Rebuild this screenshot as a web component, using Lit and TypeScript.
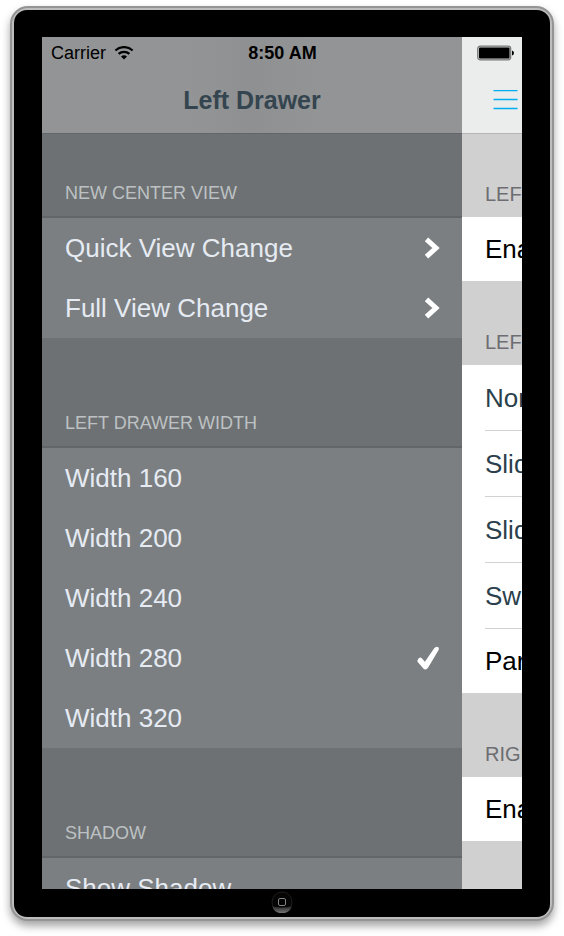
import { LitElement, html, svg, css } from "lit";
import { customElement, property, state } from "lit/decorators.js";
import { classMap } from "lit/directives/class-map.js";

type Accessory = "chevron" | "check" | "";

interface Section {
  title: string;
  rows: string[];
  kind?: "links" | "choices";
}

const DRAWER: Section[] = [
  { title: "NEW CENTER VIEW", rows: ["Quick View Change", "Full View Change"], kind: "links" },
  {
    title: "LEFT DRAWER WIDTH",
    rows: ["Width 160", "Width 200", "Width 240", "Width 280", "Width 320"],
    kind: "choices",
  },
  { title: "SHADOW", rows: ["Show Shadow"] },
];

const CENTER: Section[] = [
  { title: "LEFT DRAWER", rows: ["Enabled"] },
  {
    title: "LEFT DRAWER ANIMATION",
    rows: ["None", "Slide", "Slide & Scale", "Swinging Door", "Parallax"],
  },
  { title: "RIGHT DRAWER", rows: ["Enabled"] },
];

const chevron = svg`<svg width="24" height="24" viewBox="0 0 24 24" aria-hidden="true">
  <path d="M10.500 3.300L20 12L10.500 20.700" fill="none" stroke="#fff" stroke-width="5"/></svg>`;

const check = svg`<svg width="24" height="26" viewBox="0 0 24 26" aria-hidden="true">
  <path d="M1.800 14.800Q3.600 11.200 6 13.400L8.900 16.800L18.200 3.300Q20.200 0.600 22.300 2.300Q23.400 3.400 22.300 5.600L12.200 22.600Q9.600 26.200 6.900 23L1.900 17.200Q1 16 1.800 14.800Z" fill="#fff"/></svg>`;

@customElement("drawer-row")
export class DrawerRow extends LitElement {
  @property() label = "";
  @property() accessory: Accessory = "";

  static styles = css`
    :host { display: block; }
    .row {
      display: flex;
      align-items: center;
      justify-content: space-between;
      width: 100%;
      height: 60px;
      padding: 0 22px 0 23px;
      border: 0;
      background: #7b7f81;
      color: #e6ebf3;
      font: 26px/30px "Liberation Sans", Arial, sans-serif;
      text-align: left;
      white-space: nowrap;
    }
    svg { display: block; flex: none; }
  `;

  render() {
    const icon = this.accessory === "chevron" ? chevron : this.accessory === "check" ? check : "";
    return html`<button class="row" type="button"><span>${this.label}</span>${icon}</button>`;
  }
}

@customElement("app-root")
export class AppRoot extends LitElement {
  @state() private width = "Width 280";
  @state() private animation = "Parallax";

  static styles = css`
    :host {
      display: flex;
      box-sizing: border-box;
      height: 100vh;
      padding: 6px 10px 15px;
      background: #fff;
      font-family: "Liberation Sans", Arial, sans-serif;
    }
    .rim {
      display: flex;
      flex: 1;
      min-width: 0;
      border: 2px solid #949494;
      border-radius: 18px;
      background: #bcbdbc;
      padding: 2px;
      box-shadow: 0 5px 8px rgba(0, 0, 0, 0.36);
    }
    .bezel {
      display: flex;
      flex: 1;
      flex-direction: column;
      min-width: 0;
      padding: 27px 28px 0;
      border-radius: 13px;
      background: #000;
    }
    .screen {
      position: relative;
      display: grid;
      grid-template-columns: minmax(0, 1fr) 60px;
      grid-template-rows: minmax(0, 1fr);
      flex: 1;
      min-height: 0;
      overflow: hidden;
    }
    .status {
      position: absolute;
      inset: 0 0 auto 0;
      display: grid;
      grid-template-columns: 1fr auto 1fr;
      align-items: center;
      height: 32px;
      padding: 0 8px 0 9px;
      color: #000;
      font-size: 18px;
      line-height: 20px;
    }
    .carrier { display: flex; align-items: center; gap: 8px; }
    .time { font-weight: bold; }
    .battery { justify-self: end; }
    svg { display: block; }
    .drawer, .center { min-width: 0; overflow: hidden; }
    .drawer { background: #6d7173; }
    .center { background: #d0d0d0; }
    .bar {
      display: flex;
      box-sizing: border-box;
      height: 97px;
      padding-top: 30px;
      align-items: center;
      justify-content: center;
    }
    .drawer .bar {
      border-bottom: 1px solid #626668;
      background: linear-gradient(90deg, #939495 35%, #8f9092 50%, #939495 66%);
    }
    .center .bar { border-bottom: 1px solid #b4b5b5; background: #ebedec; }
    .title { margin: 0; color: #34454f; font-size: 25px; line-height: 30px; }
    .menu { margin-left: 26px; padding: 0; border: 0; background: none; }
    .heading {
      display: flex;
      box-sizing: border-box;
      align-items: flex-end;
      margin: 0;
      padding: 0 0 13px 23px;
      font-size: 18px;
      font-weight: normal;
      line-height: 20px;
      white-space: nowrap;
    }
    .drawer .heading { height: 110px; border-bottom: 2px solid #626668; color: #bdc1c3; }
    .drawer .first { height: 84px; }
    .center .heading { height: 84px; padding-bottom: 13px; color: #6d6d72; font-size: 20px; }
    .center .first { height: 83px; }
    .group { background: #fff; padding-left: 23px; }
    .option {
      display: block;
      width: 100%;
      height: 66px;
      padding: 0;
      border: 0;
      border-bottom: 1px solid #d2d2d4;
      background: none;
      color: #2b3f4c;
      font: 26px/30px "Liberation Sans", Arial, sans-serif;
      text-align: left;
      white-space: nowrap;
    }
    .option:last-child { height: 64px; border-bottom: 0; }
    .chosen { color: #000; }
    .chin { display: flex; justify-content: center; height: 28px; padding-top: 2px; box-sizing: border-box; }
    .home { width: 22px; height: 22px; padding: 0; border: 0; background: none; }
  `;

  private accessory(section: Section, row: string): Accessory {
    if (section.kind === "links") return "chevron";
    return section.kind === "choices" && row === this.width ? "check" : "";
  }

  private drawerSection(section: Section, index: number) {
    return html`
      <h2 class=${classMap({ heading: true, first: index === 0 })}>${section.title}</h2>
      ${section.rows.map(
        (row) => html`<drawer-row
          .label=${row}
          .accessory=${this.accessory(section, row)}
          @click=${() => { if (section.kind === "choices") this.width = row; }}
        ></drawer-row>`
      )}
    `;
  }

  private centerSection(section: Section, index: number) {
    const single = section.rows.length === 1;
    return html`
      <h2 class=${classMap({ heading: true, first: index === 0 })}>${section.title}</h2>
      <div class="group">
        ${section.rows.map(
          (row) => html`<button
            type="button"
            class=${classMap({ option: true, chosen: single || row === this.animation })}
            @click=${() => { if (!single) this.animation = row; }}
          >${row}</button>`
        )}
      </div>
    `;
  }

  render() {
    return html`
      <div class="rim">
        <div class="bezel">
          <div class="screen">
            <section class="drawer">
              <header class="bar"><h1 class="title">Left Drawer</h1></header>
              ${DRAWER.map((s, i) => this.drawerSection(s, i))}
            </section>
            <main class="center">
              <header class="bar">
                <button class="menu" type="button" aria-label="Menu">
                  <svg width="25" height="20" viewBox="0 0 25 20">
                    <path d="M0.500 0.500H24.500M0.500 9.500H24.500M0.500 18.500H24.500" stroke="#00aeef" stroke-width="1.300"/>
                  </svg>
                </button>
              </header>
              ${CENTER.map((s, i) => this.centerSection(s, i))}
            </main>
            <div class="status">
              <span class="carrier">Carrier
                <svg width="20" height="14" viewBox="0 0 20 14" aria-hidden="true">
                  <path d="M1.400 4.500A12.500 12.500 0 0 1 18.600 4.500M4.600 7.900A8 8 0 0 1 15.400 7.900" fill="none" stroke="#000" stroke-width="2.200"/>
                  <path d="M7 10.500A4.500 4.500 0 0 1 13 10.500L10 13.500Z" fill="#000"/>
                </svg>
              </span>
              <span class="time">8:50 AM</span>
              <svg class="battery" width="37" height="16" viewBox="0 0 37 16" aria-label="Battery full" role="img">
                <rect x="0.700" y="1.200" width="33" height="13.600" rx="2.500" fill="#c9cac9" stroke="#777978" stroke-width="1.200"/>
                <rect x="2" y="2.500" width="30.500" height="11" rx="1" fill="#000"/>
                <path d="M35 5.500Q37 6 37 8T35 10.500Z" fill="#000"/>
              </svg>
            </div>
          </div>
          <div class="chin">
            <button class="home" type="button" aria-label="Home">
              <svg width="22" height="22" viewBox="0 0 22 22">
                <defs>
                  <linearGradient id="glow" x1="0" y1="0" x2="0" y2="1">
                    <stop offset="0" stop-color="#222"/><stop offset="1" stop-color="#777"/>
                  </linearGradient>
                </defs>
                <circle cx="11" cy="11" r="10" fill="#050505" stroke="#1d1d1d"/>
                <path d="M1 15Q11 18 21 15A10.500 10.500 0 0 1 1 15Z" fill="url(#glow)"/>
                <rect x="7.500" y="7.500" width="7" height="7" rx="1.500" fill="#000" stroke="#858585"/>
              </svg>
            </button>
          </div>
        </div>
      </div>
    `;
  }
}
